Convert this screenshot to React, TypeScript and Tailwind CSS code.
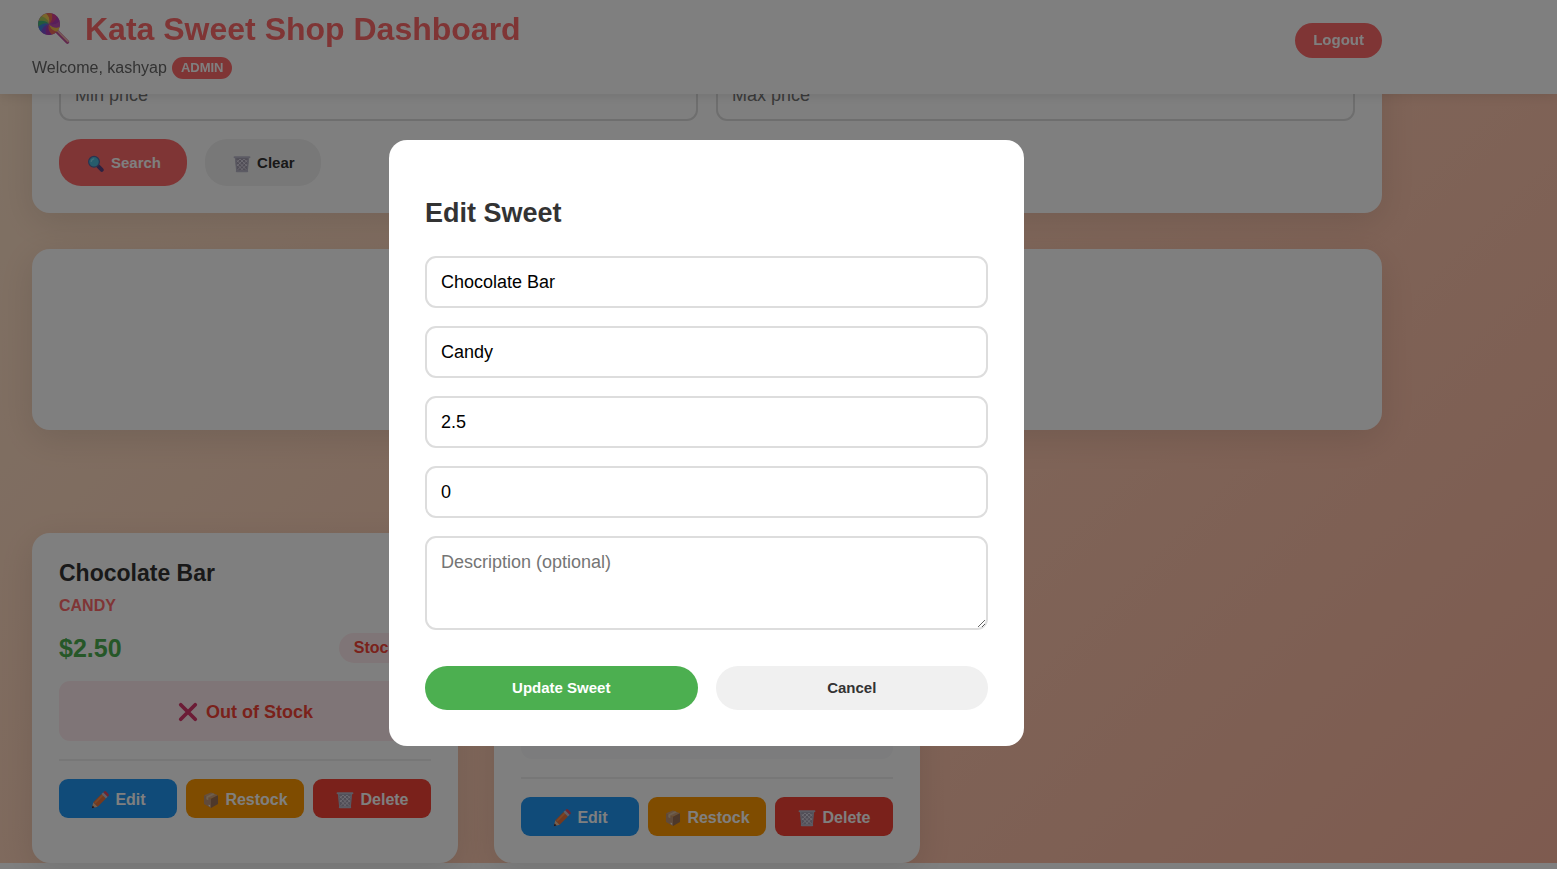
import { useState } from "react";
import type { ReactNode } from "react";

type IconProps = { className?: string };

function LollipopIcon({ className }: IconProps) {
  const colors = ["#f3c04b", "#ef6a5a", "#a83bb0", "#7b4fd0", "#3f83d9", "#43b77a", "#a8c95a", "#f2cf52", "#f0744f", "#d83f8e", "#b03cb4", "#c04fb4"];
  return (
    <svg viewBox="0 0 44 44" className={className} aria-hidden="true">
      <path d="M24.5 24 35.4 35" stroke="#c0509c" strokeWidth="3.8" strokeLinecap="round" />
      <path d="M25.6 24 36 34.4" stroke="#f0b4a8" strokeWidth="1.6" strokeLinecap="round" />
      <circle cx="17" cy="17" r="11" fill="#b45ab4" />
      {colors.map((c, i) => (
        <path
          key={c}
          d="M17 17C18.6 13.4 17.2 9.6 14.2 6.4A11 11 0 0 1 19.8 6.4C21.6 10 20.4 14 17 17Z"
          fill={c}
          transform={`rotate(${i * 30 + 120} 17 17)`}
        />
      ))}
    </svg>
  );
}

function MagnifierIcon({ className }: IconProps) {
  return (
    <svg viewBox="0 0 20 20" className={className} aria-hidden="true">
      <path d="m12.4 12.4 3.4 3.4" stroke="#5a4280" strokeWidth="4" strokeLinecap="round" />
      <circle cx="8" cy="7.8" r="5.4" fill="#4cb8d8" stroke="#5468a0" strokeWidth="1.2" />
      <path d="M5.2 7.4A3.2 3.2 0 0 1 7.8 4.8" stroke="#86d9ec" strokeWidth="1.3" strokeLinecap="round" fill="none" />
    </svg>
  );
}

function BinIcon({ className }: IconProps) {
  return (
    <svg viewBox="0 0 20 20" className={className} aria-hidden="true">
      <path d="M3.2 3.6h13.6l-1.2 13.8H4.4Z" fill="#a29cae" />
      <path d="m4.6 6 10 10M8 5l7 7M4.8 10l6.4 6.6M12 5l3.6 3.4M15.4 6l-10 10M12 5l-7 7M15.2 10l-6.4 6.6M8 5 4.6 8.4" stroke="#e4dfec" strokeWidth=".8" />
      <path d="m3.6 4 1.1 13M16.4 4l-1.1 13" stroke="#b3b0c2" strokeWidth="1.2" />
      <path d="M2.6 3.2h14.8M4.8 17.2h10.4" stroke="#b9b6c8" strokeWidth="2" strokeLinecap="round" />
    </svg>
  );
}

function PencilIcon({ className }: IconProps) {
  return (
    <svg viewBox="0 0 20 20" className={className} aria-hidden="true">
      <path d="m1.8 18.2 1.5-5.9 4.4 4.4Z" fill="#f0bd94" />
      <path d="m1.8 18.2.8-2.8 2 2Z" fill="#3a2a3a" />
      <path d="m3.3 12.3 8.2-8.2 4.4 4.4-8.2 8.2Z" fill="#e8733c" />
      <path d="m5 13 8.2-8.2" stroke="#f58f50" strokeWidth="1.6" />
      <path d="m11.5 4.1 1.8-1.8 4.4 4.4-1.8 1.8Z" fill="#c9bccb" />
      <path d="m13.3 2.3.8-.8q1-.8 2 .1l2.3 2.3q.9 1 .1 2l-.8.8Z" fill="#e4485a" />
    </svg>
  );
}

function BoxIcon({ className }: IconProps) {
  return (
    <svg viewBox="0 0 20 20" className={className} aria-hidden="true">
      <path d="m10 1.6 7.8 3.2L10 8.6 2.2 4.8Z" fill="#cfa07c" />
      <path d="M2.2 4.8 10 8.6v10.2l-7.8-4.4Z" fill="#c09474" />
      <path d="M17.8 4.8 10 8.6v10.2l7.8-4.4Z" fill="#9c7054" />
      <path d="m12.2 2.6-7.4 3.5v3.2l2.2 1V7.1l7.4-3.5Z" fill="#dcbf9c" />
      <path d="m7.4 15 1.6.9v1.6l-1.6-.9Z" fill="#f3e6dc" />
    </svg>
  );
}

function CrossIcon({ className }: IconProps) {
  return (
    <svg viewBox="0 0 20 20" className={className} aria-hidden="true">
      <path d="m3.4 3.4 13.2 13.2M16.6 3.4 3.4 16.6" stroke="#d8386c" strokeWidth="3.4" strokeLinecap="round" />
    </svg>
  );
}

const fieldClass =
  "block w-full rounded-[11px] border-2 border-[#ddd] bg-white px-3.5 text-[18px] text-black placeholder:text-[#757575] outline-none";

function ActionButton({ icon, className, children }: { icon: ReactNode; className: string; children: ReactNode }) {
  return (
    <button
      type="button"
      className={`flex h-[39px] flex-1 items-center justify-center gap-[5px] rounded-[9px] pt-0.5 text-[16px] font-bold text-white ${className}`}
    >
      {icon}
      {children}
    </button>
  );
}

function AdminActions() {
  return (
    <div className="mt-[18px] flex gap-[9px] border-t-2 border-[#eee] pt-[18px]">
      <ActionButton icon={<PencilIcon className="size-5" />} className="bg-[#2196f3]">Edit</ActionButton>
      <ActionButton icon={<BoxIcon className="size-[18px]" />} className="bg-[#ff9800]">Restock</ActionButton>
      <ActionButton icon={<BinIcon className="size-5" />} className="bg-[#f44336]">Delete</ActionButton>
    </div>
  );
}

const panelClass = "rounded-[18px] bg-white shadow-[0_9px_34px_rgba(0,0,0,0.1)]";

export default function App() {
  const [sweet, setSweet] = useState({ name: "Chocolate Bar", category: "Candy", price: "2.5", quantity: "0", description: "" });
  const fields = [
    { key: "name", label: "Sweet name" },
    { key: "category", label: "Category" },
    { key: "price", label: "Price" },
    { key: "quantity", label: "Quantity" },
  ] as const;

  return (
    <div className="h-screen overflow-hidden bg-white font-['Liberation_Sans',Arial,sans-serif] text-[#333]">
      <header className="fixed inset-x-0 top-0 z-10 bg-white px-8 pt-0.5 pb-[15px] shadow-[0_2px_11px_rgba(0,0,0,0.1)]">
        <div className="flex max-w-[1350px] items-center justify-between">
          <div>
            <h1 className="flex items-center gap-[9px] text-[32px] leading-[54px] font-bold text-[#ff6b6b]">
              <LollipopIcon className="size-11" />
              Kata Sweet Shop Dashboard
            </h1>
            <p className="mt-px flex items-center gap-[5px] text-[16px] leading-[22px] text-[#666]">
              Welcome, kashyap
              <span className="rounded-full bg-[#ff6b6b] px-[9px] text-[13px] font-bold text-white">ADMIN</span>
            </p>
          </div>
          <button type="button" className="h-[35px] rounded-full bg-[#ff6b6b] px-[18px] text-[15px] font-bold text-white">
            Logout
          </button>
        </div>
      </header>

      <main className="-mt-[360px] bg-linear-135 from-[#ffecd2] to-[#fcb69f] px-8 pt-[402px]">
        <div className="max-w-[1350px]">
          <section className={`p-[27px] ${panelClass}`}>
            <div className="grid grid-cols-2 gap-[18px]">
              <input aria-label="Min price" placeholder="Min price" className={`h-[52px] ${fieldClass}`} />
              <input aria-label="Max price" placeholder="Max price" className={`h-[52px] ${fieldClass}`} />
            </div>
            <div className="mt-[18px] flex gap-[18px] text-[15px] font-bold">
              <button type="button" className="flex h-[47px] items-center gap-[5px] rounded-[22px] bg-[#ff6b6b] pt-0.5 pr-[26px] pl-[27px] text-white">
                <MagnifierIcon className="size-5" />
                Search
              </button>
              <button type="button" className="flex h-[47px] items-center gap-[5px] rounded-[22px] bg-[#f0f0f0] pt-0.5 pr-[26px] pl-[27px]">
                <BinIcon className="size-5" />
                Clear
              </button>
            </div>
          </section>

          <section className={`mt-9 h-[181px] ${panelClass}`} />

          <div className="mt-[103px] grid grid-cols-3 gap-9">
            <article className={`min-h-[330px] p-[27px] ${panelClass}`}>
              <h3 className="text-[23px] leading-[27px] font-bold">Chocolate Bar</h3>
              <p className="mt-[9px] text-[16px] leading-5 font-bold text-[#ff6b6b]">CANDY</p>
              <div className="mt-[17px] flex items-center justify-between">
                <span className="text-[25px] leading-[30px] font-bold text-[#4caf50]">$2.50</span>
                <span className="rounded-full bg-[#ffebee] px-[15px] text-[16px] leading-[30px] font-bold text-[#f44336]">Stock: 0</span>
              </div>
              <div className="mt-[18px] flex h-[60px] items-center justify-center gap-[7px] rounded-[11px] bg-[#ffebee] pt-0.5 text-[18px] font-bold text-[#f44336]">
                <CrossIcon className="size-[22px]" />
                Out of Stock
              </div>
              <AdminActions />
            </article>
            <article className={`flex flex-col justify-end p-[27px] ${panelClass}`}>
              <div className="h-[78px] rounded-[11px] bg-[#f8f9fa]" />
              <AdminActions />
            </article>
          </div>
        </div>
      </main>

      <div className="fixed inset-0 z-20 bg-black/50">
        <div className="flex max-w-[1413px] justify-center pt-[140px]">
          <form
            role="dialog"
            aria-labelledby="edit-title"
            className="w-[635px] rounded-[18px] bg-white px-9 pt-[58px] pb-9"
            onSubmit={(e) => e.preventDefault()}
          >
            <h2 id="edit-title" className="text-[27px] leading-[31px] font-bold">Edit Sweet</h2>
            <div className="mt-[27px] flex flex-col gap-[18px]">
              {fields.map((f) => (
                <input
                  key={f.key}
                  aria-label={f.label}
                  value={sweet[f.key]}
                  onChange={(e) => setSweet({ ...sweet, [f.key]: e.target.value })}
                  className={`h-[52px] ${fieldClass}`}
                />
              ))}
              <textarea
                aria-label="Description (optional)"
                placeholder="Description (optional)"
                value={sweet.description}
                onChange={(e) => setSweet({ ...sweet, description: e.target.value })}
                className={`h-[94px] resize-y py-3.5 leading-5 ${fieldClass}`}
              />
            </div>
            <div className="mt-9 grid grid-cols-2 gap-[18px] text-[15px] font-bold">
              <button type="submit" className="h-11 rounded-full bg-[#4caf50] text-white">Update Sweet</button>
              <button type="button" className="h-11 rounded-full bg-[#f0f0f0]">Cancel</button>
            </div>
          </form>
        </div>
      </div>
    </div>
  );
}
